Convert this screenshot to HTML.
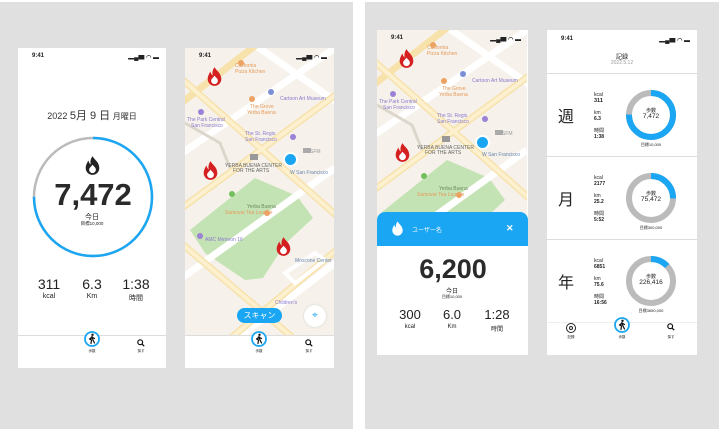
<!DOCTYPE html>
<html><head><meta charset="utf-8"><style>
*{margin:0;padding:0;box-sizing:border-box}
body{width:721px;height:429px;background:#fff;position:relative;overflow:hidden;font-family:"Liberation Sans","Noto Sans CJK JP",sans-serif;color:#222}
.panel{position:absolute;background:#e0e0e0}
.ph{position:absolute;background:#fff;overflow:hidden}
.a{position:absolute}
.c{position:absolute;text-align:center;transform:translateX(-50%);white-space:nowrap}
.st{font-size:6px;font-weight:bold}
</style></head><body>
<div class="panel" style="left:0;top:2px;width:353px;height:427px"></div>
<div class="panel" style="left:365px;top:2px;width:354px;height:427px"></div>

<svg width="0" height="0" style="position:absolute">
<defs>
<symbol id="flame" viewBox="0 0 20 24"><path d="M10 1C12 5 18 8 18 15A8 8 0 0 1 2 15C2 11 4 9 5 6C6 9 7 10 8 11C7 7 8 4 10 1Z" fill="currentColor"/><path d="M10 11C11 13 14 14 14 17A4 4 0 0 1 6 17C6 15 8 14 10 11Z" fill="#fff"/></symbol>
<symbol id="walk" viewBox="0 0 16 16"><circle cx="8" cy="8" r="7" fill="#fff" stroke="#1aa6f2" stroke-width="1.8"/><circle cx="8.5" cy="3.8" r="1.2" fill="#111"/><path d="M8 5.5L6.5 8.5L7.5 9L7 12.5M8 5.5L9 9L10.5 12M8 6L10.5 7.5M7.5 6.5L5.5 8" stroke="#111" stroke-width="1.2" fill="none" stroke-linecap="round"/></symbol>
<symbol id="search" viewBox="0 0 10 10"><circle cx="4" cy="4" r="3" fill="none" stroke="#111" stroke-width="1.5"/><path d="M6 6L9 9" stroke="#111" stroke-width="1.6"/></symbol>
<symbol id="map" viewBox="0 0 150 287">
<rect width="150" height="287" fill="#f6f1ea"/>
<polygon points="5,182 70,130 112,148 128,170 100,196 78,230 60,232 20,205" fill="#c4e3b4"/>
<g stroke="#fff" stroke-width="7" fill="none"><path d="M-10 110 L150 0"/><path d="M-10 235 L150 120"/><path d="M40 300 L150 215"/><path d="M60 -10 L160 60"/></g>
<g stroke="#f7e2ac" stroke-width="7" fill="none"><path d="M-10 165 L160 40"/><path d="M-10 25 L160 175"/><path d="M-10 190 L120 300"/><path d="M40 295 L160 195"/><path d="M-10 60 L80 -10"/></g>
<g stroke="#fcf0cf" stroke-width="4" fill="none"><path d="M-10 165 L160 40"/><path d="M-10 25 L160 175"/><path d="M-10 190 L120 300"/><path d="M40 295 L160 195"/></g>
<path d="M0 75 L35 95 L45 120" stroke="#ddd6cc" stroke-width="3" fill="none"/>
<path d="M100 225 L130 205 L140 212 L110 235 Z" stroke="#fff" stroke-width="4" fill="none"/>
<g font-family="Liberation Sans" font-size="5" fill="#e59a5a"><text x="50" y="19">California</text><text x="50" y="25">Pizza Kitchen</text><text x="65" y="60">The Grove</text><text x="62" y="66">Yerba Buena</text><text x="40" y="166" >Samovar Tea Lounge</text></g>
<g font-family="Liberation Sans" font-size="5" fill="#8a7bd0"><text x="95" y="52">Cartoon Art Museum</text><text x="2" y="73">The Park Central</text><text x="6" y="79">San Francisco</text><text x="60" y="87">The St. Regis</text><text x="60" y="93">San Francisco</text><text x="20" y="193">AMC Metreon 16</text><text x="90" y="256">Children's</text></g>
<g font-family="Liberation Sans" font-size="5" fill="#6a88b0"><text x="110" y="214">Moscone Center</text><text x="105" y="126">W San Francisco</text></g>
<g font-family="Liberation Sans" font-size="5" fill="#666"><text x="40" y="119">YERBA BUENA CENTER</text><text x="48" y="124">FOR THE ARTS</text><text x="62" y="160" fill="#6a8a60">Yerba Buena</text></g>
<g font-size="5" fill="#999"><text x="125" y="105">SFM</text></g>
<rect x="65" y="106" width="8" height="6" fill="#999"/><rect x="118" y="100" width="8" height="5" fill="#aaa"/>
<circle cx="56" cy="15" r="3" fill="#eba263"/><circle cx="67" cy="51" r="3" fill="#eba263"/><circle cx="82" cy="165" r="3" fill="#eba263"/>
<circle cx="86" cy="44" r="3" fill="#7b8fd4"/><circle cx="16" cy="64" r="3" fill="#9b82d6"/><circle cx="108" cy="89" r="3" fill="#9b82d6"/><circle cx="15" cy="188" r="3" fill="#9b82d6"/><circle cx="47" cy="146" r="3" fill="#71c05b"/>
</symbol>
</defs></svg>

<!-- Phone 1 -->
<div class="ph" style="left:18px;top:48px;width:148px;height:320px">
<div class="a st" style="left:14px;top:5px">9:41</div>
<div class="a st" style="right:7px;top:4px;font-size:6px">▂▄▆ ◠ ▬</div>
<div class="c" style="left:74px;top:59px;font-size:9px;color:#333">2022 <span style="font-size:11px">5月 9 日</span> <span style="font-size:8px">月曜日</span></div>
<svg class="a" style="left:14px;top:88px" width="122" height="122"><circle cx="61" cy="61" r="59" fill="none" stroke="#bbb" stroke-width="2.5"/><circle cx="61" cy="61" r="59" fill="none" stroke="#1aa6f2" stroke-width="2.5" stroke-dasharray="278 400" transform="rotate(-90 61 61)"/></svg>
<svg class="a" style="left:66px;top:107px;color:#222" width="17" height="21"><use href="#flame"/></svg>
<div class="c" style="left:75px;top:129px;font-size:31px;font-weight:bold;color:#2a2a2a">7,472</div>
<div class="c" style="left:74px;top:164px;font-size:7px">今日</div>
<div class="c" style="left:74px;top:173px;font-size:4.5px">目標10,000</div>
<div class="c" style="left:31px;top:228px;font-size:14px">311</div>
<div class="c" style="left:74px;top:228px;font-size:14px">6.3</div>
<div class="c" style="left:118px;top:228px;font-size:14px">1:38</div>
<div class="c" style="left:31px;top:245px;font-size:7px">kcal</div>
<div class="c" style="left:74px;top:245px;font-size:7px">Km</div>
<div class="c" style="left:118px;top:245px;font-size:7px">時間</div>
<div class="a" style="left:0;top:287px;width:148px;height:1px;background:#ddd"></div>
<svg class="a" style="left:66px;top:283px" width="16" height="16"><use href="#walk"/></svg>
<div class="c" style="left:74px;top:301px;font-size:3.5px">歩数</div>
<svg class="a" style="left:119px;top:291px" width="8" height="8"><use href="#search"/></svg>
<div class="c" style="left:123px;top:301px;font-size:3.5px">探す</div>
</div>

<!-- Phone 2 -->
<div class="ph" style="left:185px;top:48px;width:149px;height:320px">
<svg class="a" style="left:0;top:0" width="150" height="287"><use href="#map"/></svg>
<div class="a st" style="left:14px;top:5px">9:41</div>
<div class="a st" style="right:7px;top:4px">▂▄▆ ◠ ▬</div>
<svg class="a" style="left:21px;top:17px;color:#d42020" width="17" height="23"><use href="#flame"/></svg>
<svg class="a" style="left:17px;top:111px;color:#d42020" width="17" height="23"><use href="#flame"/></svg>
<svg class="a" style="left:90px;top:187px;color:#d42020" width="17" height="23"><use href="#flame"/></svg>
<div class="a" style="left:98px;top:104px;width:15px;height:15px;border-radius:50%;background:#1aa6f2;border:2px solid #fff"></div>
<div class="a" style="left:52px;top:260px;width:45px;height:15px;border-radius:8px;background:#1aa6f2;color:#fff;font-size:8px;text-align:center;line-height:15px">スキャン</div>
<div class="a" style="left:119px;top:257px;width:22px;height:22px;border-radius:50%;background:#fff;color:#1aa6f2;font-size:10px;text-align:center;line-height:22px;box-shadow:0 0 2px #ccc">⌖</div>
<div class="a" style="left:0;top:287px;width:149px;height:33px;background:#fff;border-top:1px solid #ddd"></div>
<svg class="a" style="left:66px;top:283px" width="16" height="16"><use href="#walk"/></svg>
<div class="c" style="left:74px;top:301px;font-size:3.5px">歩数</div>
<svg class="a" style="left:120px;top:291px" width="8" height="8"><use href="#search"/></svg>
<div class="c" style="left:124px;top:301px;font-size:3.5px">探す</div>
</div>

<!-- Phone 3 -->
<div class="ph" style="left:377px;top:30px;width:151px;height:325px">
<svg class="a" style="left:0;top:0" width="150" height="287"><use href="#map"/></svg>
<div class="a st" style="left:14px;top:5px">9:41</div>
<div class="a st" style="right:7px;top:4px">▂▄▆ ◠ ▬</div>
<svg class="a" style="left:21px;top:17px;color:#d42020" width="17" height="23"><use href="#flame"/></svg>
<svg class="a" style="left:17px;top:111px;color:#d42020" width="17" height="23"><use href="#flame"/></svg>
<div class="a" style="left:98px;top:105px;width:15px;height:15px;border-radius:50%;background:#1aa6f2;border:2px solid #fff"></div>
<div class="a" style="left:0;top:182px;width:151px;height:143px;background:#fff;border-radius:8px 8px 0 0"></div>
<div class="a" style="left:0;top:182px;width:151px;height:34px;background:#1aa6f2;border-radius:8px 8px 0 0"></div>
<svg class="a" style="left:14px;top:190px;color:#fff" width="13" height="17"><use href="#flame"/></svg>
<div class="a" style="left:35px;top:195px;font-size:6px;color:#fff">ユーザー名</div>
<div class="a" style="left:129px;top:193px;font-size:9px;color:#fff;font-weight:bold">✕</div>
<div class="c" style="left:76px;top:224px;font-size:27px;font-weight:bold;color:#2a2a2a">6,200</div>
<div class="c" style="left:75px;top:256px;font-size:6px">今日</div>
<div class="c" style="left:75px;top:264px;font-size:4px">目標10,000</div>
<div class="c" style="left:33px;top:277px;font-size:13px">300</div>
<div class="c" style="left:75px;top:277px;font-size:13px">6.0</div>
<div class="c" style="left:120px;top:277px;font-size:13px">1:28</div>
<div class="c" style="left:33px;top:294px;font-size:6px">kcal</div>
<div class="c" style="left:75px;top:294px;font-size:6px">Km</div>
<div class="c" style="left:120px;top:294px;font-size:6px">時間</div>
</div>

<!-- Phone 4 -->
<div class="ph" style="left:547px;top:30px;width:150px;height:325px">
<div class="a st" style="left:14px;top:6px">9:41</div>
<div class="a st" style="right:7px;top:5px">▂▄▆ ◠ ▬</div>
<div class="c" style="left:75px;top:22px;font-size:6px">記録</div>
<div class="c" style="left:75px;top:30px;font-size:5px;color:#999">2022.5.12</div>
<div class="a" style="left:0;top:43px;width:150px;height:1px;background:#ddd"></div>
<div class="a" style="left:0;top:126px;width:150px;height:1px;background:#ddd"></div>
<div class="a" style="left:0;top:209px;width:150px;height:1px;background:#ddd"></div>
<div class="a" style="left:0;top:292px;width:150px;height:1px;background:#eee"></div>

<div class="a" style="left:11px;top:73px;font-size:16px">週</div>
<div class="a" style="left:47px;top:62px;font-size:5px;line-height:6px">kcal<br><b style="font-size:5.5px">311</b><br><span style="display:block;height:6px"></span>km<br><b>6.3</b><br><span style="display:block;height:6px"></span>時間<br><b>1:38</b></div>
<svg class="a" style="left:79px;top:60px" width="50" height="50"><circle cx="25" cy="25" r="22" fill="none" stroke="#bbb" stroke-width="6"/><circle cx="25" cy="25" r="22" fill="none" stroke="#1aa6f2" stroke-width="6" stroke-dasharray="104 200" transform="rotate(-90 25 25)"/></svg>
<div class="c" style="left:104px;top:78px;font-size:5px;line-height:6px">歩数<br><span style="font-size:6.5px">7,472</span></div>
<div class="c" style="left:104px;top:112px;font-size:4px">目標10,000</div>

<div class="a" style="left:11px;top:156px;font-size:16px">月</div>
<div class="a" style="left:47px;top:145px;font-size:5px;line-height:6px">kcal<br><b>2177</b><br><span style="display:block;height:6px"></span>km<br><b>25.2</b><br><span style="display:block;height:6px"></span>時間<br><b>5:52</b></div>
<svg class="a" style="left:79px;top:143px" width="50" height="50"><circle cx="25" cy="25" r="22" fill="none" stroke="#bbb" stroke-width="6"/><circle cx="25" cy="25" r="22" fill="none" stroke="#1aa6f2" stroke-width="6" stroke-dasharray="35 200" transform="rotate(-90 25 25)"/></svg>
<div class="c" style="left:104px;top:161px;font-size:5px;line-height:6px">歩数<br><span style="font-size:6.5px">75,472</span></div>
<div class="c" style="left:104px;top:195px;font-size:4px">目標300,000</div>

<div class="a" style="left:11px;top:239px;font-size:16px">年</div>
<div class="a" style="left:47px;top:228px;font-size:5px;line-height:6px">kcal<br><b>6851</b><br><span style="display:block;height:6px"></span>km<br><b>75.6</b><br><span style="display:block;height:6px"></span>時間<br><b>16:56</b></div>
<svg class="a" style="left:79px;top:226px" width="50" height="50"><circle cx="25" cy="25" r="22" fill="none" stroke="#bbb" stroke-width="6"/><circle cx="25" cy="25" r="22" fill="none" stroke="#1aa6f2" stroke-width="6" stroke-dasharray="18 200" transform="rotate(-90 25 25)"/></svg>
<div class="c" style="left:104px;top:244px;font-size:5px;line-height:6px">歩数<br><span style="font-size:6.5px">226,416</span></div>
<div class="c" style="left:104px;top:278px;font-size:4px">目標3650,000</div>

<div class="a" style="left:19px;top:293px;width:10px;height:10px;border-radius:50%;border:1.5px solid #222"></div>
<div class="a" style="left:22px;top:296px;width:4px;height:4px;border-radius:50%;border:1px solid #222"></div>
<div class="c" style="left:24px;top:305px;font-size:3.5px">記録</div>
<svg class="a" style="left:67px;top:287px" width="16" height="16"><use href="#walk"/></svg>
<div class="c" style="left:75px;top:305px;font-size:3.5px">歩数</div>
<svg class="a" style="left:120px;top:293px" width="8" height="8"><use href="#search"/></svg>
<div class="c" style="left:124px;top:305px;font-size:3.5px">探す</div>
</div>
</body></html>
